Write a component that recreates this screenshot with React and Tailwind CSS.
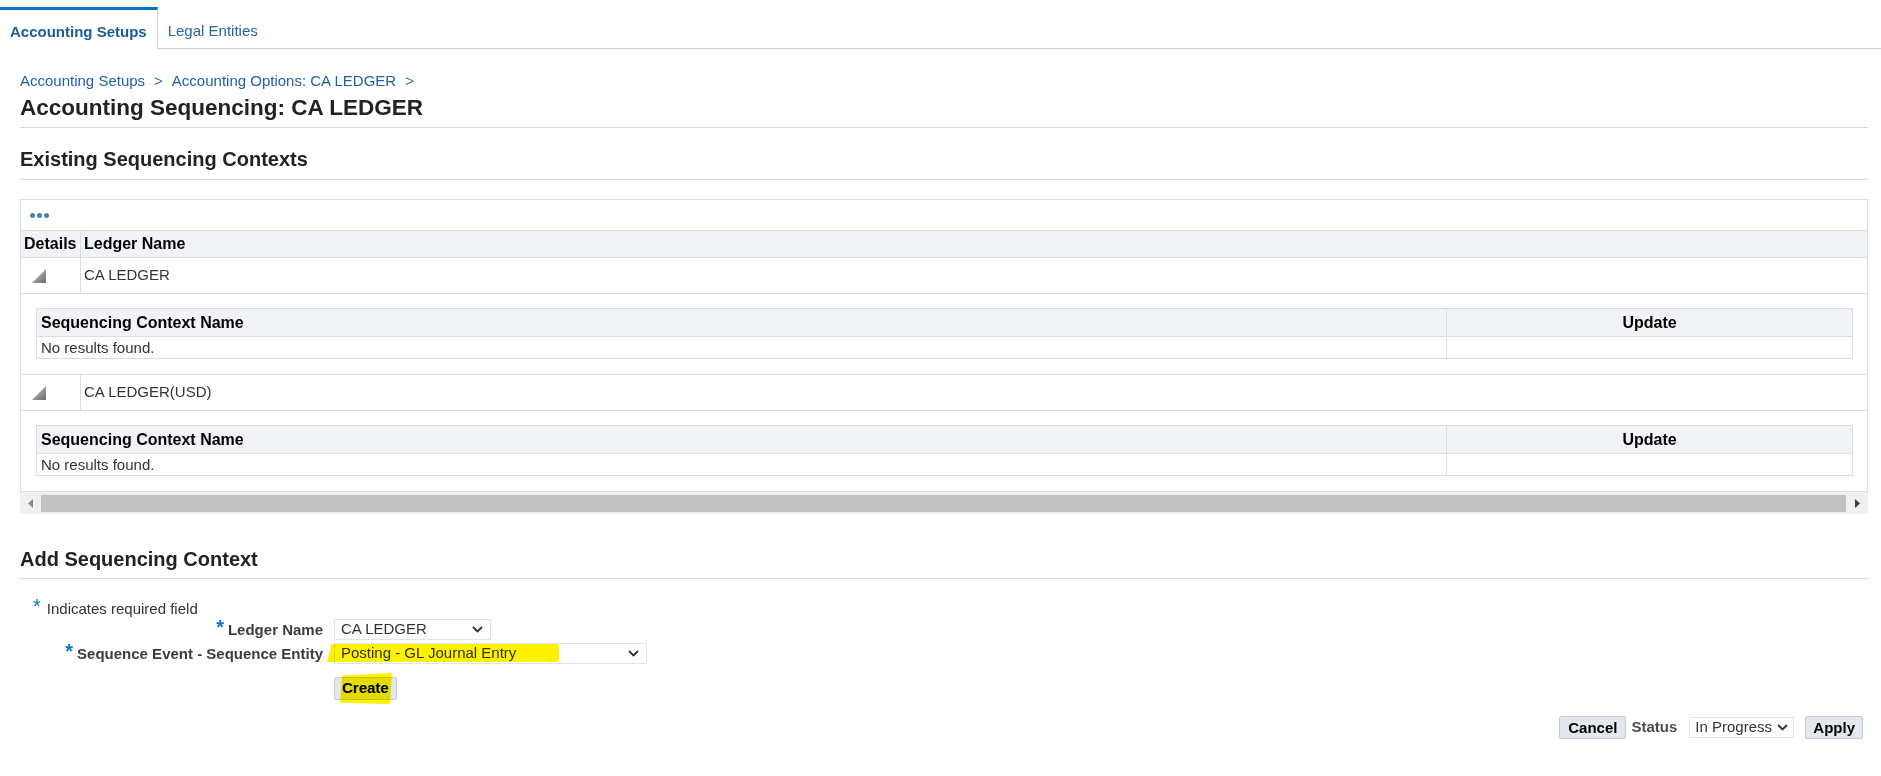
import React from 'react';

function Chevron({ className = '' }) {
  return (
    <svg width="11" height="7" viewBox="0 0 11 7" className={className}>
      <path d="M1 1 L5.5 5.5 L10 1" fill="none" stroke="#333" strokeWidth="1.8" />
    </svg>
  );
}

function Disclosure() {
  return (
    <svg width="14" height="14" viewBox="0 0 14 14">
      <defs>
        <linearGradient id="tri" x1="0" y1="0" x2="1" y2="1">
          <stop offset="0" stopColor="#c4c4c4" />
          <stop offset="1" stopColor="#6e6e6e" />
        </linearGradient>
      </defs>
      <polygon points="14,0 14,14 0,14" fill="url(#tri)" />
    </svg>
  );
}

function Select({ value, width }) {
  return (
    <div className={`flex items-center justify-between h-[21px] border border-[#dfe4ea] bg-white pl-[6px] pr-[7px] text-[15px] text-[#333] ${width}`}>
      <span>{value}</span>
      <Chevron />
    </div>
  );
}

function DetailTable() {
  return (
    <div className="border border-[#d6dee6]">
      <div className="grid grid-cols-[1fr_405px] h-[27px] bg-[#f1f3f7] text-[16px] font-bold text-black">
        <div className="flex items-center pl-[4px] border-r border-[#d6dee6]">Sequencing Context Name</div>
        <div className="flex items-center justify-center">Update</div>
      </div>
      <div className="grid grid-cols-[1fr_405px] h-[22px] border-t border-[#d6dee6] text-[15px] text-[#333]">
        <div className="flex items-center pl-[4px] border-r border-[#d6dee6]">No results found.</div>
        <div></div>
      </div>
    </div>
  );
}

function LedgerRow({ name }) {
  return (
    <>
      <div className="flex h-[36px] border-t border-[#d6dee6]">
        <div className="w-[60px] border-r border-[#d6dee6] flex items-center pl-[11px]">
          <Disclosure />
        </div>
        <div className="flex items-center pl-[3px] text-[15px] text-[#333]">{name}</div>
      </div>
      <div className="border-t border-[#d6dee6] pt-[14px] pl-[15px] pr-[14px] pb-[15px]">
        <DetailTable />
      </div>
    </>
  );
}

export default function App() {
  return (
    <div className="min-h-[776px] bg-white font-['Liberation_Sans',Arial,sans-serif] text-[#333]">
      {/* tabs */}
      <div className="flex pt-[7px]">
        <div className="h-[42px] border-t-[3px] border-t-[#0572ce] border-r border-r-[#c9d1d9] px-[10px] pt-[6px] flex items-center text-[15px] font-bold text-[#1c5c9c]">
          Accounting Setups
        </div>
        <div className="flex-1 h-[42px] border-b border-[#c9d1d9] flex items-center pl-[10px] pt-[8px] text-[15px] text-[#2463a8]">
          Legal Entities
        </div>
      </div>

      <div className="pl-[20px] pr-[13px]">
        {/* breadcrumb */}
        <div className="mt-[23px] flex items-center gap-[9px] text-[15px] leading-[18px] text-[#1f60a8]">
          <span>Accounting Setups</span>
          <span className="text-[#3d6ea8]">&gt;</span>
          <span>Accounting Options: CA LEDGER</span>
          <span className="text-[#3d6ea8]">&gt;</span>
        </div>
        <h1 className="mt-[5px] pb-[6px] border-b border-[#d4dbe2] text-[22.5px] leading-[26px] font-bold text-[#222]">
          Accounting Sequencing: CA LEDGER
        </h1>

        <h2 className="mt-[19px] pb-[8px] border-b border-[#d4dbe2] text-[20px] leading-[24px] font-bold text-[#222]">
          Existing Sequencing Contexts
        </h2>

        {/* table */}
        <div className="mt-[19px] border border-[#d6dee6]">
          <div className="h-[30px] flex items-center pl-[9px] gap-[2px]">
            <span className="w-[5px] h-[5px] rounded-full bg-[#4a7fb8]"></span>
            <span className="w-[5px] h-[5px] rounded-full bg-[#4a7fb8]"></span>
            <span className="w-[5px] h-[5px] rounded-full bg-[#4a7fb8]"></span>
          </div>
          <div className="flex h-[27px] border-t border-[#d6dee6] bg-[#f1f3f7] text-[16px] font-bold text-black">
            <div className="w-[60px] border-r border-[#d6dee6] flex items-center pl-[3px]">Details</div>
            <div className="flex items-center pl-[3px]">Ledger Name</div>
          </div>
          <LedgerRow name="CA LEDGER" />
          <LedgerRow name="CA LEDGER(USD)" />
        </div>
        <div className="h-[22px] bg-[#f0f0f0] flex items-center">
          <div className="w-[21px] flex justify-center">
            <svg width="5" height="9" viewBox="0 0 5 9"><polygon points="5,0 5,9 0,4.5" fill="#8a8a8a" /></svg>
          </div>
          <div className="flex-1 h-[17px] bg-[#c1c1c1]"></div>
          <div className="w-[22px] flex justify-center">
            <svg width="5" height="9" viewBox="0 0 5 9"><polygon points="0,0 0,9 5,4.5" fill="#404040" /></svg>
          </div>
        </div>

        <h2 className="mt-[33px] pb-[7px] border-b border-[#d4dbe2] text-[20px] leading-[24px] font-bold text-[#222]">
          Add Sequencing Context
        </h2>

        {/* form */}
        <div className="mt-[21px] flex items-start pl-[13px] text-[15px] leading-[18px] text-[#333]">
          <span className="text-[20px] leading-[12px] text-[#0572ce] mr-[6px]">*</span>
          <span>Indicates required field</span>
        </div>
        <div className="mt-[1px] flex items-center">
          <div className="w-[303px] flex justify-end items-start text-[15px] font-bold text-[#3c3c3c]">
            <span className="text-[20px] leading-[12px] text-[#0572ce] mr-[4px]">*</span>
            <span className="leading-[18px]">Ledger Name</span>
          </div>
          <div className="ml-[11px]">
            <Select value="CA LEDGER" width="w-[157px]" />
          </div>
        </div>
        <div className="mt-[3px] flex items-center">
          <div className="w-[303px] flex justify-end items-start text-[15px] font-bold text-[#3c3c3c]">
            <span className="text-[20px] leading-[12px] text-[#0572ce] mr-[4px]">*</span>
            <span className="leading-[18px]">Sequence Event - Sequence Entity</span>
          </div>
          <div className="ml-[11px] relative">
            <Select value="Posting - GL Journal Entry" width="w-[313px]" />
            <div className="absolute left-[-7px] top-[1px] w-[232px] h-[18px] bg-[#fff200] mix-blend-multiply rounded-r-[3px] [clip-path:polygon(2%_0,100%_0,100%_100%,0_100%)]"></div>
          </div>
        </div>
        <div className="mt-[12px] ml-[314px] relative w-fit">
          <button className="h-[23px] px-[7px] bg-[#e4e8ec] border border-[#c5ccd3] rounded-[2px] text-[15px] font-bold text-black leading-[18px]">
            Create
          </button>
          <div className="absolute left-[6px] top-[-3px] w-[52px] h-[31px] bg-[#fff200] mix-blend-multiply [clip-path:polygon(4%_8%,100%_0,96%_100%,0_96%)]"></div>
        </div>

        {/* footer actions */}
        <div className="mt-[16px] mr-[5px] flex items-center justify-end">
          <button className="h-[23px] px-[8px] bg-[#e4e8ec] border border-[#c5ccd3] rounded-[2px] text-[15px] font-bold text-black">
            Cancel
          </button>
          <span className="ml-[5px] text-[15px] font-bold text-[#4d4d4d]">Status</span>
          <div className="ml-[12px] flex items-center justify-between w-[105px] h-[21px] border border-[#dfe4ea] pl-[5px] pr-[5px] text-[15px] text-[#333]">
            <span>In Progress</span>
            <Chevron />
          </div>
          <button className="ml-[11px] h-[23px] px-[7px] bg-[#e4e8ec] border border-[#c5ccd3] rounded-[2px] text-[15px] font-bold text-black">
            Apply
          </button>
        </div>
      </div>
    </div>
  );
}
